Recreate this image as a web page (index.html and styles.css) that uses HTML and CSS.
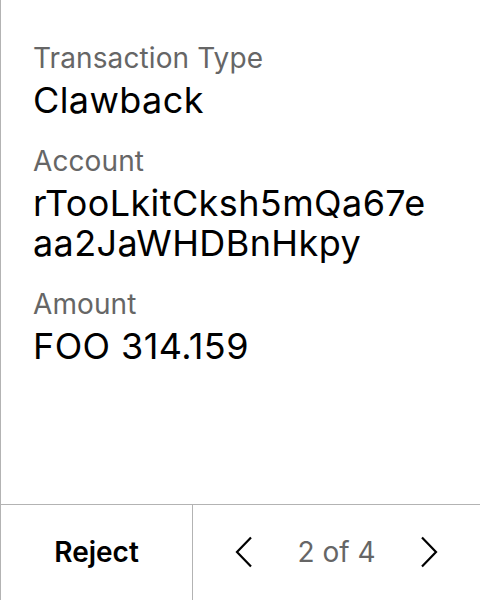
FILE: index.html
```html
<!DOCTYPE html>
<html>
<head>
<meta charset="utf-8">
<link rel="stylesheet" href="styles.css">
</head>
<body>
<div class="panel">
  <div class="details">
    <div class="field">
      <div class="label">Transaction Type</div>
      <div class="value">Clawback</div>
    </div>
    <div class="field">
      <div class="label">Account</div>
      <div class="value">rTooLkitCksh5mQa67eaa2JaWHDBnHkpy</div>
    </div>
    <div class="field">
      <div class="label">Amount</div>
      <div class="value">FOO 314.159</div>
    </div>
  </div>
  <div class="footer">
    <button class="reject">Reject</button>
    <div class="pager">
      <button class="arrow" aria-label="Previous">
        <svg width="20" height="32" viewBox="0 0 20 32"><path d="M17 1.5 L3 16 L17 30.5" fill="none" stroke="#000" stroke-width="2.2"/></svg>
      </button>
      <span class="count">2 of 4</span>
      <button class="arrow" aria-label="Next">
        <svg width="20" height="32" viewBox="0 0 20 32"><path d="M3 1.5 L17 16 L3 30.5" fill="none" stroke="#000" stroke-width="2.2"/></svg>
      </button>
    </div>
  </div>
</div>
</body>
</html>
```
FILE: styles.css
```css
html, body {
  margin: 0;
  padding: 0;
  background: #fff;
}
body {
  font-family: Inter, "Noto Sans", sans-serif;
  color: #000;
}
.panel {
  width: 480px;
  height: 600px;
  box-sizing: border-box;
  border-left: 1px solid #b3b3b3;
  display: flex;
  flex-direction: column;
}
.details {
  flex: 1;
  padding: 41px 44px 0 32px;
  display: flex;
  flex-direction: column;
  gap: 24px;
}
.label {
  font-size: 28px;
  line-height: 34px;
  letter-spacing: 0.1px;
  color: #666;
}
.value {
  font-size: 36px;
  line-height: 40px;
  letter-spacing: 0.4px;
  margin-top: 5px;
  word-break: break-all;
}
.footer {
  height: 96px;
  box-sizing: border-box;
  border-top: 1px solid #b3b3b3;
  display: flex;
}
.reject {
  width: 192px;
  border: none;
  border-right: 1px solid #b3b3b3;
  background: none;
  font-family: inherit;
  font-size: 28px;
  font-weight: 600;
  color: #000;
  padding: 0 0 2px 0;
}
.pager {
  flex: 1;
  display: flex;
  align-items: center;
  justify-content: space-between;
  padding: 0 41px 2px 41px;
}
.arrow {
  border: none;
  background: none;
  padding: 0;
  display: flex;
}
.count {
  font-size: 28px;
  color: #666;
}
```
